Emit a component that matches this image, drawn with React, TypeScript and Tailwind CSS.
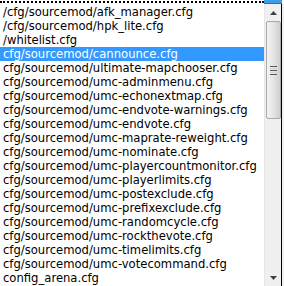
const files = [
  '/cfg/sourcemod/afk_manager.cfg',
  '/cfg/sourcemod/hpk_lite.cfg',
  '/whitelist.cfg',
  'cfg/sourcemod/cannounce.cfg',
  'cfg/sourcemod/ultimate-mapchooser.cfg',
  'cfg/sourcemod/umc-adminmenu.cfg',
  'cfg/sourcemod/umc-echonextmap.cfg',
  'cfg/sourcemod/umc-endvote-warnings.cfg',
  'cfg/sourcemod/umc-endvote.cfg',
  'cfg/sourcemod/umc-maprate-reweight.cfg',
  'cfg/sourcemod/umc-nominate.cfg',
  'cfg/sourcemod/umc-playercountmonitor.cfg',
  'cfg/sourcemod/umc-playerlimits.cfg',
  'cfg/sourcemod/umc-postexclude.cfg',
  'cfg/sourcemod/umc-prefixexclude.cfg',
  'cfg/sourcemod/umc-randomcycle.cfg',
  'cfg/sourcemod/umc-rockthevote.cfg',
  'cfg/sourcemod/umc-timelimits.cfg',
  'cfg/sourcemod/umc-votecommand.cfg',
  'config_arena.cfg',
]

const selected = 3

export default function App() {
  return (
    <div className="w-[284px] h-[286px] overflow-hidden bg-white flex flex-col font-['DejaVu_Sans',sans-serif] text-[11.6px]">
      {/* combo box edge above the list */}
      <div className="flex h-[4px] shrink-0">
        <div className="flex-1 border-t-2 border-dotted border-black mt-[1px]" />
        <div className="w-[18px] bg-[#3c9de6] border-b border-[#2a6fa8]" />
        <div className="w-[2px]" />
      </div>
      <div className="flex flex-1 min-h-0">
        <ul className="flex-1 min-w-0 pt-[1px]">
          {files.map((f, i) => (
            <li
              key={f}
              className={`h-[14px] leading-[14px] pl-[3px] whitespace-nowrap ${
                i === selected ? 'bg-[#3399ff] text-white' : 'text-black'
              }`}
            >
              {f}
            </li>
          ))}
        </ul>
        {/* scrollbar */}
        <div className="w-[17px] bg-[#f0f0f0] border-l border-[#e6e6e6] flex flex-col items-center">
          <div className="h-[17px] w-full flex items-center justify-center">
            <svg width="7" height="4" viewBox="0 0 7 4"><path d="M3.5 0L7 4H0z" fill="#404040" /></svg>
          </div>
          <div className="w-[15px] h-[98px] rounded-[2px] border border-[#a9a9a9] bg-gradient-to-r from-[#f4f4f4] via-[#e4e4e4] to-[#cfcfcf] flex flex-col items-center justify-center gap-[1px]">
            <div className="w-[7px] h-[1px] bg-[#5a5a5a]" />
            <div className="w-[7px] h-[1px] bg-[#d8d8d8]" />
            <div className="w-[7px] h-[1px] bg-[#5a5a5a]" />
            <div className="w-[7px] h-[1px] bg-[#d8d8d8]" />
            <div className="w-[7px] h-[1px] bg-[#5a5a5a]" />
          </div>
          <div className="flex-1" />
          <div className="h-[17px] w-full flex items-center justify-center">
            <svg width="7" height="4" viewBox="0 0 7 4"><path d="M0 0H7L3.5 4z" fill="#404040" /></svg>
          </div>
        </div>
        <div className="w-[1px] bg-black" />
        <div className="w-[2px] bg-[#f0f0f0]" />
      </div>
    </div>
  )
}
